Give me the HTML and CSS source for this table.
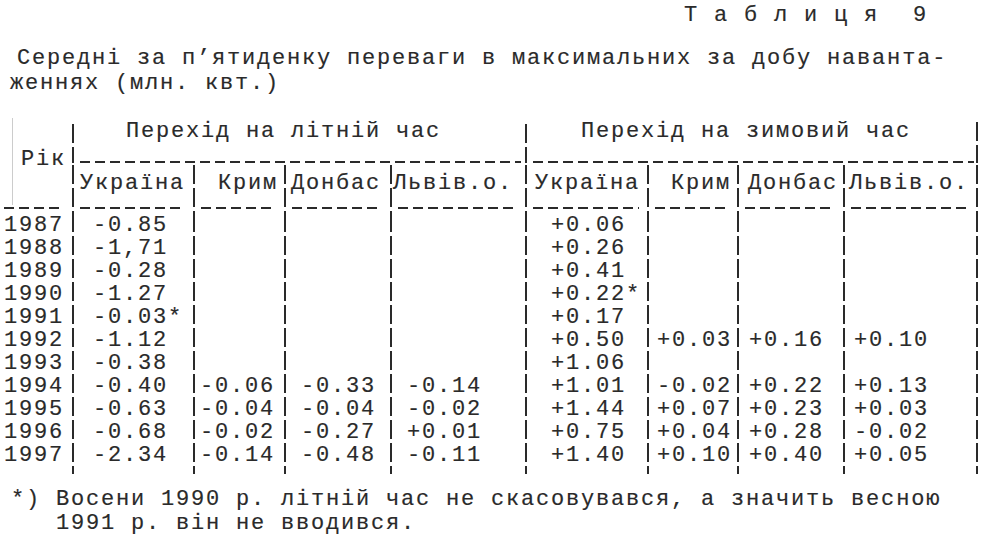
FILE: index.html
```html
<!DOCTYPE html>
<html lang="uk">
<head>
<meta charset="utf-8">
<title>Таблиця 9</title>
<link rel="stylesheet" href="styles.css">
</head>
<body>
<div class="page">
  <div class="title">Т а б л и ц я<span class="num">9</span></div>
  <div class="caption">
    <div class="l1">Середні за п’ятиденку переваги в максимальних за добу наванта-</div>
    <div class="l2">женнях (млн. квт.)</div>
  </div>

  <div class="tbl">
    <div class="year-h">Рік</div>
    <div class="grp g1">Перехід на літній час</div>
    <div class="grp g2">Перехід на зимовий час</div>

    <div class="sub c1">Україна</div>
    <div class="sub c2">Крим</div>
    <div class="sub c3">Донбас</div>
    <div class="sub c4">Львів.о.</div>
    <div class="sub c5">Україна</div>
    <div class="sub c6">Крим</div>
    <div class="sub c7">Донбас</div>
    <div class="sub c8 last">Львів.о.</div>

    <div class="yr">1987</div><div class="d c1">-0.85</div><div class="d c2"></div><div class="d c3"></div><div class="d c4"></div><div class="d c5">+0.06</div><div class="d c6"></div><div class="d c7"></div><div class="d c8 last"></div>
    <div class="yr">1988</div><div class="d c1">-1,71</div><div class="d c2"></div><div class="d c3"></div><div class="d c4"></div><div class="d c5">+0.26</div><div class="d c6"></div><div class="d c7"></div><div class="d c8 last"></div>
    <div class="yr">1989</div><div class="d c1">-0.28</div><div class="d c2"></div><div class="d c3"></div><div class="d c4"></div><div class="d c5">+0.41</div><div class="d c6"></div><div class="d c7"></div><div class="d c8 last"></div>
    <div class="yr">1990</div><div class="d c1">-1.27</div><div class="d c2"></div><div class="d c3"></div><div class="d c4"></div><div class="d c5">+0.22*</div><div class="d c6"></div><div class="d c7"></div><div class="d c8 last"></div>
    <div class="yr">1991</div><div class="d c1">-0.03*</div><div class="d c2"></div><div class="d c3"></div><div class="d c4"></div><div class="d c5">+0.17</div><div class="d c6"></div><div class="d c7"></div><div class="d c8 last"></div>
    <div class="yr">1992</div><div class="d c1">-1.12</div><div class="d c2"></div><div class="d c3"></div><div class="d c4"></div><div class="d c5">+0.50</div><div class="d c6">+0.03</div><div class="d c7">+0.16</div><div class="d c8 last">+0.10</div>
    <div class="yr">1993</div><div class="d c1">-0.38</div><div class="d c2"></div><div class="d c3"></div><div class="d c4"></div><div class="d c5">+1.06</div><div class="d c6"></div><div class="d c7"></div><div class="d c8 last"></div>
    <div class="yr">1994</div><div class="d c1">-0.40</div><div class="d c2">-0.06</div><div class="d c3">-0.33</div><div class="d c4">-0.14</div><div class="d c5">+1.01</div><div class="d c6">-0.02</div><div class="d c7">+0.22</div><div class="d c8 last">+0.13</div>
    <div class="yr">1995</div><div class="d c1">-0.63</div><div class="d c2">-0.04</div><div class="d c3">-0.04</div><div class="d c4">-0.02</div><div class="d c5">+1.44</div><div class="d c6">+0.07</div><div class="d c7">+0.23</div><div class="d c8 last">+0.03</div>
    <div class="yr">1996</div><div class="d c1">-0.68</div><div class="d c2">-0.02</div><div class="d c3">-0.27</div><div class="d c4">+0.01</div><div class="d c5">+0.75</div><div class="d c6">+0.04</div><div class="d c7">+0.28</div><div class="d c8 last">-0.02</div>
    <div class="yr">1997</div><div class="d c1">-2.34</div><div class="d c2">-0.14</div><div class="d c3">-0.48</div><div class="d c4">-0.11</div><div class="d c5">+1.40</div><div class="d c6">+0.10</div><div class="d c7">+0.40</div><div class="d c8 last">+0.05</div>

    <div class="yr stub"></div><div class="d stub"></div><div class="d stub"></div><div class="d stub"></div><div class="d stub"></div><div class="d stub"></div><div class="d stub"></div><div class="d stub"></div><div class="d stub last"></div>
  </div>

  <div class="note">
    <div class="n1">*) Восени 1990 р. літній час не скасовувався, а значить весною</div>
    <div class="n2">1991 р. він не вводився.</div>
  </div>
</div>
</body>
</html>
```
FILE: styles.css
```css
html, body {
  margin: 0;
  padding: 0;
  background: #ffffff;
}

body {
  width: 988px;
  height: 542px;
  overflow: hidden;
  color: #2a2a2a;
  font-family: "Liberation Mono", "DejaVu Sans Mono", monospace;
  font-size: 22px;
  letter-spacing: 1.8px;
  -webkit-text-stroke: 0.15px #2a2a2a;
}

.page {
  --vbar: repeating-linear-gradient(to bottom, #2a2a2a 0 19px, transparent 19px 23px);
  --hdash: repeating-linear-gradient(to right, #2a2a2a 0 10px, transparent 10px 15px);
  padding-top: 3px;
}

.title {
  line-height: 25px;
  height: 25px;
  padding-left: 684px;
  white-space: nowrap;
}

.title .num {
  margin-left: 34px;
}

.caption {
  margin-top: 18px;
  line-height: 25px;
}

.caption .l1,
.caption .l2 {
  white-space: nowrap;
}

.caption .l1 {
  padding-left: 17px;
}

.caption .l2 {
  padding-left: 10px;
}

/* ---------- table ---------- */
.tbl {
  margin-top: 22px;
  margin-left: 3px;
  display: grid;
  grid-template-columns: 69px 121px 91px 106px 135px 122px 90px 106px 135px;
  grid-template-rows: 45px 50px repeat(11, 23px) 8px;
}

.tbl > div {
  white-space: nowrap;
}

.year-h {
  grid-column: 1;
  grid-row: 1 / span 2;
  padding-top: 29px;
  padding-left: 18px;
  line-height: 25px;
  background-image:
    linear-gradient(#cccccc, #cccccc),
    var(--hdash);
  background-size: 1px 95px, 58px 2px;
  background-position: 9px -8px, 1px calc(100% - 4px);
  background-repeat: no-repeat;
}

.grp {
  grid-row: 1;
  line-height: 25px;
  padding-top: 1px;
  background-image: var(--vbar), var(--hdash);
  background-size: 2px 100%, calc(100% - 12px) 2px;
  background-position: 0 6px, 8px 100%;
  background-repeat: no-repeat;
}

.g1 {
  grid-column: 2 / span 4;
  padding-left: 54px;
}

.g2 {
  grid-column: 6 / span 4;
  padding-left: 56px;
  background-image: var(--vbar), var(--vbar), var(--hdash);
  background-size: 2px 100%, 2px 100%, calc(100% - 12px) 2px;
  background-position: 0 6px, 100% 4px, 8px 100%;
}

.sub {
  grid-row: 2;
  line-height: 25px;
  padding-top: 8px;
  background-image: var(--vbar), var(--hdash);
  background-size: 2px 100%, calc(100% - 16px) 2px;
  background-position: 0 2px, 8px calc(100% - 4px);
  background-repeat: no-repeat;
}

.sub.last {
  background-image: var(--vbar), var(--vbar), var(--hdash);
  background-size: 2px 100%, 2px 100%, calc(100% - 16px) 2px;
  background-position: 0 2px, 100% 2px, 8px calc(100% - 4px);
}

.sub.c1 { padding-left: 8px; }
.sub.c2 { padding-left: 25px; }
.sub.c3 { padding-left: 7px; }
.sub.c4 { padding-left: 3px; }
.sub.c5 { padding-left: 10px; }
.sub.c6 { padding-left: 24px; }
.sub.c7 { padding-left: 11px; }
.sub.c8 { padding-left: 6px; }

.yr {
  line-height: 23px;
  padding-left: 1px;
  padding-top: 1px;
}

.d {
  line-height: 23px;
  padding-top: 1px;
  background-image: var(--vbar);
  background-size: 2px 100%;
  background-position: 0 0;
  background-repeat: no-repeat;
}

.d.last {
  background-image: var(--vbar), var(--vbar);
  background-size: 2px 100%, 2px 100%;
  background-position: 0 0, 100% 0;
}

.d.c1 { padding-left: 21px; }
.d.c2 { padding-left: 7px; }
.d.c3 { padding-left: 17px; }
.d.c4 { padding-left: 17px; }
.d.c5 { padding-left: 26px; }
.d.c6 { padding-left: 10px; }
.d.c7 { padding-left: 12px; }
.d.c8 { padding-left: 11px; }

.stub {
  background-size: 2px 8px;
}

.d.stub.last {
  background-size: 2px 8px, 2px 8px;
}

/* ---------- footnote ---------- */
.note {
  margin-top: 14px;
}

.note .n1,
.note .n2 {
  line-height: 24px;
  white-space: nowrap;
}

.note .n1 {
  padding-left: 11px;
}

.note .n2 {
  padding-left: 56px;
}
```
